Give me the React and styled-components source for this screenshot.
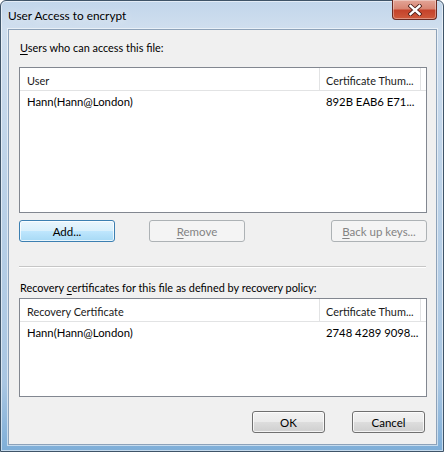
import React from 'react'
import styled, { createGlobalStyle } from 'styled-components'

const GlobalStyle = createGlobalStyle`
  html, body {
    margin: 0;
    padding: 0;
    background: #ffffff;
  }
`

const users = [{ name: 'Hann(Hann@London)', thumb: '892B EAB6 E71...' }]
const recovery = [{ name: 'Hann(Hann@London)', thumb: '2748 4289 9098...' }]

const Window = styled.div`
  box-sizing: border-box;
  width: 444px;
  height: 452px;
  display: flex;
  flex-direction: column;
  border: 1px solid #3f5468;
  border-radius: 6px 6px 0 0;
  background: linear-gradient(
    180deg,
    #c2d6eb 0%,
    #cfdeee 6%,
    #bcd2e8 40%,
    #a9c6e2 85%,
    #7eaed8 100%
  );
  box-shadow: inset 0 0 0 1px rgba(255, 255, 255, 0.55);
  font-family: 'Segoe UI', Lato, 'Noto Sans', sans-serif;
  font-size: 11.3px;
  color: #000;
`

const TitleBar = styled.div`
  display: flex;
  align-items: center;
  height: 28px;
  flex-shrink: 0;
`

const Title = styled.span`
  padding-left: 7px;
  font-size: 11.8px;
  color: #000;
  text-shadow: 0 0 8px rgba(255, 255, 255, 0.9);
`

const CloseButton = styled.div`
  align-self: flex-start;
  margin-left: auto;
  margin-right: 6px;
  margin-top: -1px;
  width: 45px;
  height: 20px;
  box-sizing: border-box;
  display: flex;
  align-items: center;
  justify-content: center;
  border: 1px solid #6b2a22;
  border-top: none;
  border-radius: 0 0 4px 4px;
  background: linear-gradient(
    180deg,
    #e3a597 0%,
    #d88674 45%,
    #c5432b 55%,
    #cf5a3c 100%
  );
  box-shadow: inset 0 0 0 1px rgba(255, 255, 255, 0.35);
`

const Client = styled.div`
  flex: 1;
  display: flex;
  flex-direction: column;
  margin: 0 6px 6px 7px;
  padding: 10px 9px 0 10px;
  background: #f0f0f0;
  border: 1px solid #8da2b9;
  box-shadow: 0 0 0 1px rgba(255, 255, 255, 0.55);
`

const Label = styled.div`
  font-size: 10.9px;
  line-height: 15px;
  padding-left: 1px;
  margin-top: ${({ $top }) => $top || 0}px;
`

const Key = styled.span`
  text-decoration: underline;
  text-underline-offset: 2px;
`

const ListBox = styled.div`
  margin-top: ${({ $top }) => $top}px;
  height: ${({ $height }) => $height}px;
  box-sizing: border-box;
  background: #fff;
  border: 1px solid #828790;
  display: flex;
  flex-direction: column;
`

const HeaderRow = styled.div`
  display: grid;
  grid-template-columns: 300px 101px 1fr;
  height: 23px;
  box-sizing: border-box;
  border-bottom: 1px solid #e2e3e4;
`

const HeaderCell = styled.div`
  display: flex;
  align-items: center;
  padding: 2px 0 0 ${({ $pad }) => $pad}px;
  border-right: 1px solid #e2e3e4;
  white-space: nowrap;
  overflow: hidden;
  font-size: 10.9px;
  color: #1a1a1a;

  &:last-child {
    border-right: none;
  }
`

const Row = styled.div`
  display: grid;
  grid-template-columns: 300px 101px 1fr;
  height: 21px;
  align-items: center;
`

const Cell = styled.div`
  padding-left: ${({ $pad }) => $pad}px;
  white-space: nowrap;
`

const ButtonRow = styled.div`
  display: flex;
  margin-top: ${({ $top }) => $top}px;
  justify-content: ${({ $end }) => ($end ? 'flex-end' : 'flex-start')};
  padding-right: ${({ $end }) => ($end ? 2 : 0)}px;
  gap: ${({ $gap }) => $gap || 0}px;
`

const Button = styled.div`
  box-sizing: border-box;
  width: ${({ $w }) => $w}px;
  height: 22px;
  margin-left: ${({ $ml }) => $ml || 0};
  display: flex;
  align-items: center;
  justify-content: center;
  font-size: 11.5px;
  border-radius: 3px;
  border: 1px solid
    ${({ $variant }) =>
      $variant === 'default'
        ? '#3c7fb1'
        : $variant === 'disabled'
          ? '#adb2b5'
          : '#707070'};
  background: ${({ $variant }) =>
    $variant === 'default'
      ? 'linear-gradient(180deg, #eaf6fd 0%, #d9f0fc 48%, #bee6fd 52%, #a7d9f5 100%)'
      : $variant === 'disabled'
        ? '#f4f4f4'
        : 'linear-gradient(180deg, #f2f2f2 0%, #ebebeb 48%, #dddddd 52%, #cfcfcf 100%)'};
  box-shadow: inset 0 0 0 1px
    ${({ $variant }) =>
      $variant === 'disabled' ? 'transparent' : 'rgba(255, 255, 255, 0.75)'};
  color: ${({ $variant }) => ($variant === 'disabled' ? '#838383' : '#000')};
`

const Separator = styled.div`
  margin-top: 24px;
  height: 0;
  border-top: 1px solid #c6c6c6;
  border-bottom: 1px solid #ffffff;
  margin-right: 1px;
`

const CloseGlyph = () => (
  <svg width="14" height="12" viewBox="0 0 14 12">
    <path
      d="M2.5 2 L11.5 10 M11.5 2 L2.5 10"
      stroke="#4a1d17"
      strokeWidth="4.2"
      strokeLinecap="square"
    />
    <path
      d="M2.5 2 L11.5 10 M11.5 2 L2.5 10"
      stroke="#ffffff"
      strokeWidth="2.4"
      strokeLinecap="square"
    />
  </svg>
)

const CertList = ({ first, items, top, height }) => (
  <ListBox $top={top} $height={height}>
    <HeaderRow>
      <HeaderCell $pad={7}>{first}</HeaderCell>
      <HeaderCell $pad={6}>Certificate Thum...</HeaderCell>
      <HeaderCell $pad={0} />
    </HeaderRow>
    {items.map((item) => (
      <Row key={item.name}>
        <Cell $pad={7}>{item.name}</Cell>
        <Cell $pad={6}>{item.thumb}</Cell>
      </Row>
    ))}
  </ListBox>
)

const App = () => {
  return (
    <>
      <GlobalStyle />
      <Window>
        <TitleBar>
          <Title>User Access to encrypt</Title>
          <CloseButton>
            <CloseGlyph />
          </CloseButton>
        </TitleBar>
        <Client>
          <Label>
            <Key>U</Key>sers who can access this file:
          </Label>
          <CertList first="User" items={users} top={12} height={146} />
          <ButtonRow $top={7}>
            <Button $w={96} $variant="default">
              Add...
            </Button>
            <Button $w={96} $ml="34px" $variant="disabled">
              <span>
                <Key>R</Key>emove
              </span>
            </Button>
            <Button $w={96} $ml="auto" $variant="disabled">
              <span>
                <Key>B</Key>ack up keys...
              </span>
            </Button>
          </ButtonRow>
          <Separator />
          <Label $top={12}>
            Recovery <Key>c</Key>ertificates for this file as defined by
            recovery policy:
          </Label>
          <CertList
            first="Recovery Certificate"
            items={recovery}
            top={3}
            height={99}
          />
          <ButtonRow $top={14} $end $gap={27}>
            <Button $w={73}>OK</Button>
            <Button $w={73}>Cancel</Button>
          </ButtonRow>
        </Client>
      </Window>
    </>
  )
}

export default App
